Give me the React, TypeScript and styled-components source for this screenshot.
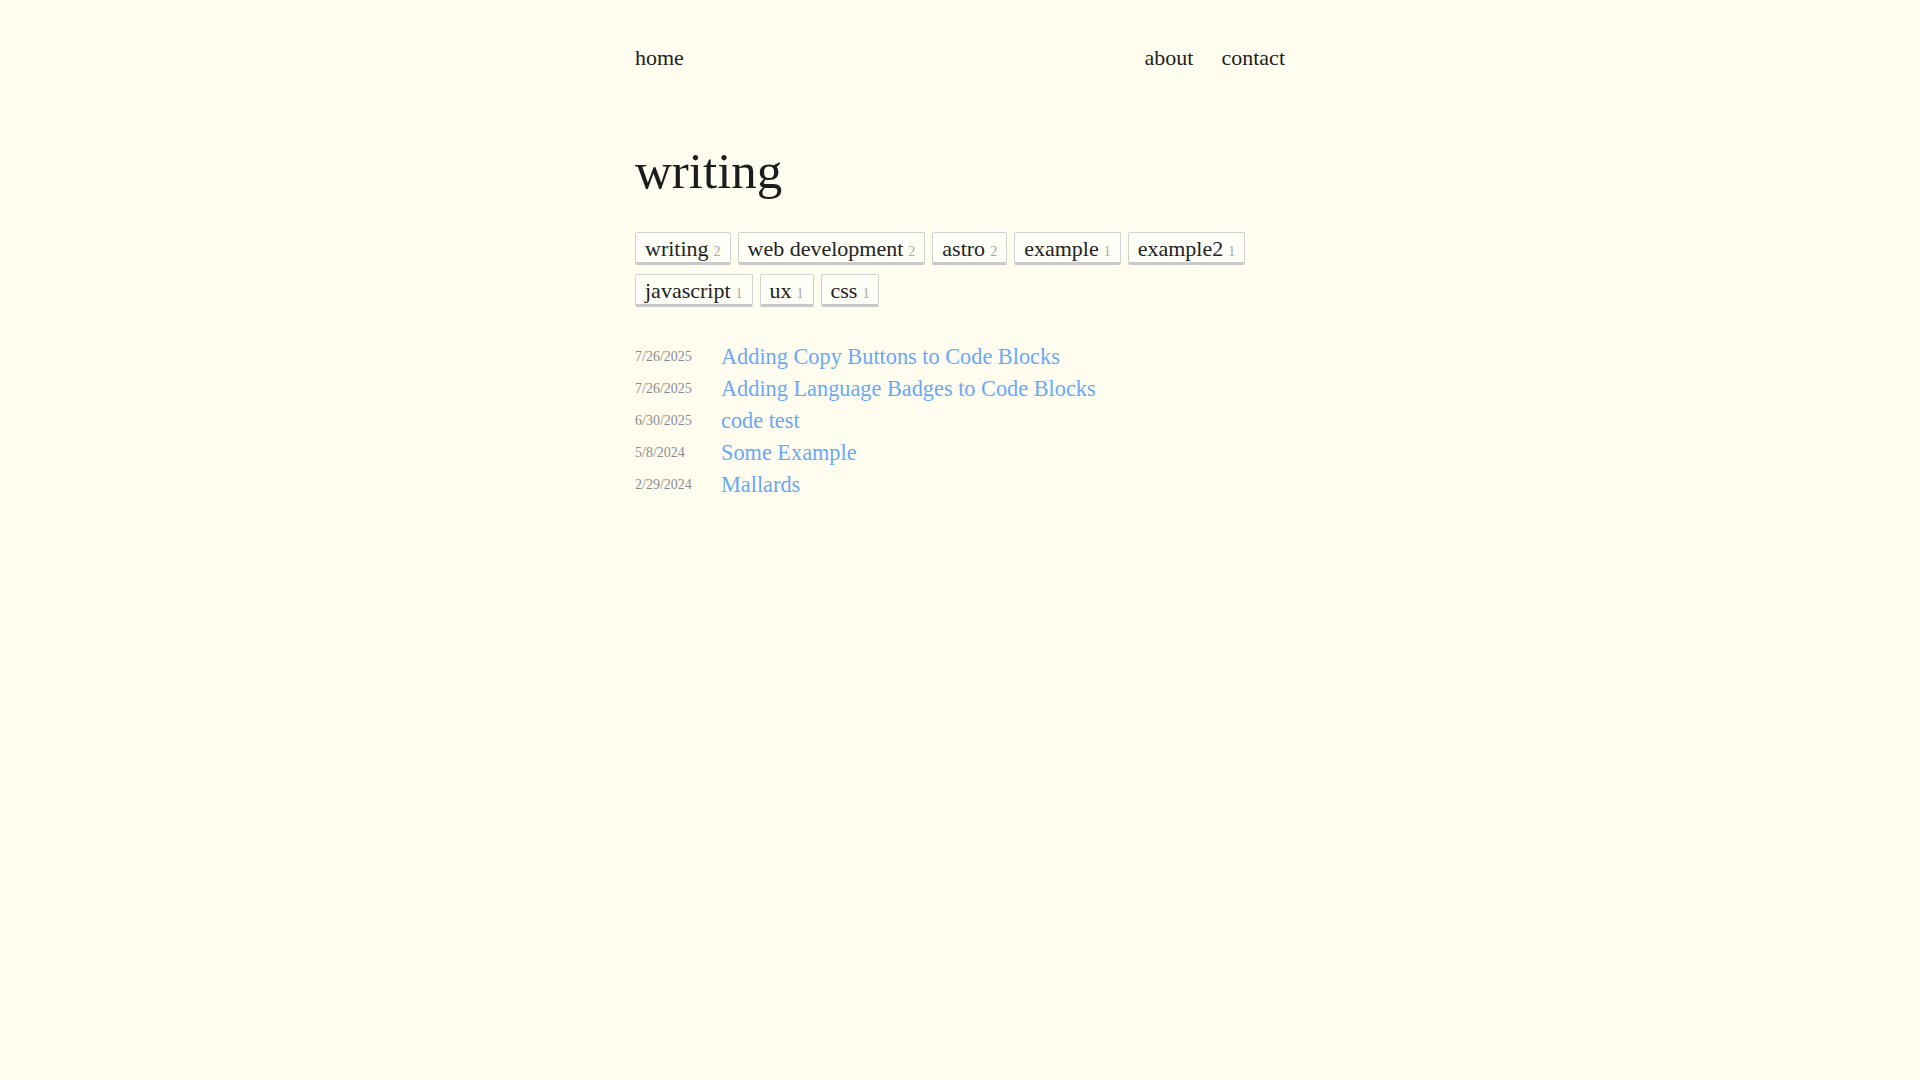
import React from "react";
import styled, { createGlobalStyle } from "styled-components";

const Global = createGlobalStyle`
  html, body { margin: 0; padding: 0; }
  body {
    background: #fffdf0;
    font-family: "Liberation Serif", "Times New Roman", serif;
    color: #222;
  }
  a { text-decoration: none; }
`;

const Page = styled.div`
  width: 650px;
  margin: 0 auto;
`;

const Nav = styled.nav`
  display: flex;
  align-items: baseline;
  height: 24px;
  padding-top: 46px;
  font-size: 22px;
  line-height: 24px;
`;

const NavLink = styled.a`
  color: #222;
`;

const NavRight = styled.div`
  margin-left: auto;
  display: flex;
  gap: 28px;
`;

const Title = styled.h1`
  margin: 73px 0 0;
  font-size: 51px;
  font-weight: normal;
  line-height: 56px;
  height: 56px;
  color: #1c1c1c;
`;

const Tags = styled.div`
  display: flex;
  flex-wrap: wrap;
  align-items: flex-start;
  column-gap: 7px;
  row-gap: 9px;
  margin-top: 33px;
`;

const Tag = styled.a`
  display: block;
  height: 26px;
  padding: 3px 9px 0;
  line-height: 25px;
  font-size: 22px;
  white-space: nowrap;
  color: #222;
  background: #fffff8;
  border: 1px solid #d2d2d2;
  border-bottom: 3px solid #c9c9c9;
  border-radius: 2px;
`;

const Count = styled.span`
  font-size: 14px;
  line-height: 1;
  color: #a8a8a8;
  margin-left: 5px;
`;

const List = styled.ul`
  list-style: none;
  margin: 34px 0 0;
  padding: 0;
`;

const Row = styled.li`
  display: flex;
  align-items: center;
  height: 32px;
  line-height: 32px;
`;

const DateText = styled.span`
  width: 86px;
  flex: none;
  font-size: 14px;
  color: #8c8c8c;
`;

const PostLink = styled.a`
  font-size: 22.3px;
  color: #6aa8f7;
`;

const tags: [string, number][] = [
  ["writing", 2],
  ["web development", 2],
  ["astro", 2],
  ["example", 1],
  ["example2", 1],
  ["javascript", 1],
  ["ux", 1],
  ["css", 1],
];

const posts: [string, string][] = [
  ["7/26/2025", "Adding Copy Buttons to Code Blocks"],
  ["7/26/2025", "Adding Language Badges to Code Blocks"],
  ["6/30/2025", "code test"],
  ["5/8/2024", "Some Example"],
  ["2/29/2024", "Mallards"],
];

export default function App() {
  return (
    <>
      <Global />
      <Page>
        <Nav>
          <NavLink href="#">home</NavLink>
          <NavRight>
            <NavLink href="#">about</NavLink>
            <NavLink href="#">contact</NavLink>
          </NavRight>
        </Nav>
        <Title>writing</Title>
        <Tags>
          {tags.map(([name, n]) => (
            <Tag key={name} href="#">
              {name}
              <Count>{n}</Count>
            </Tag>
          ))}
        </Tags>
        <List>
          {posts.map(([d, t]) => (
            <Row key={t}>
              <DateText>{d}</DateText>
              <PostLink href="#">{t}</PostLink>
            </Row>
          ))}
        </List>
      </Page>
    </>
  );
}
